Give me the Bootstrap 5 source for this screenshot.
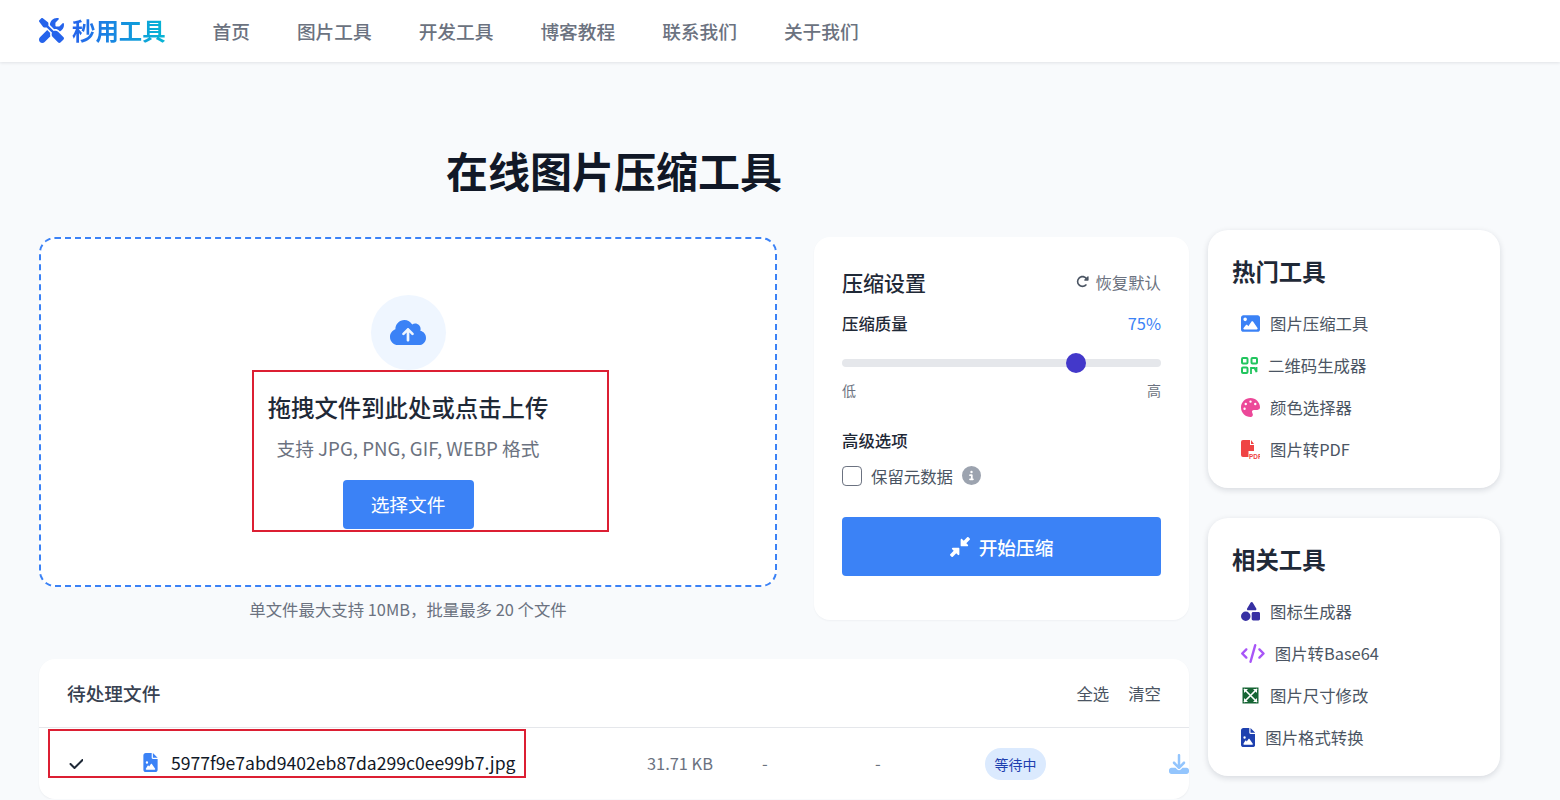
<!DOCTYPE html>
<html lang="zh-CN">
<head>
    <meta charset="UTF-8">
    <meta name="viewport" content="width=device-width, initial-scale=1.0">
    <link href="https://cdn.jsdelivr.net/npm/bootstrap@5.3.0/dist/css/bootstrap.min.css" rel="stylesheet">
    <title>在线图片压缩工具</title>
    <style>
        body {
            background: #f8fafc;
            font-family: "Noto Sans CJK SC", "Noto Sans", sans-serif;
            color: #1f2937;
            font-size: 16.4px;
        }
        .top-nav {
            height: 62px;
            background: #fff;
            padding: 0 39px;
            box-shadow: 0 1px 3px rgba(15, 23, 42, .1);
        }
        .brand-mark { gap: 8px; margin-right: 47px; text-decoration: none; }
        .brand-mark svg { width: 25px; height: 25px; }
        .brand-text {
            font-size: 23.4px;
            font-weight: 700;
            background: linear-gradient(90deg, #2563eb, #06b6d4);
            -webkit-background-clip: text;
            background-clip: text;
            color: transparent;
        }
        .top-link { font-size: 18.7px; font-weight: 500; color: #6b7280; text-decoration: none; margin-right: 47px; }
        .page-wrap { padding: 0 60px 0 39px; gap: 19px; position: relative; }
        .main-col { width: 1150px; }
        .side-col { width: 292px; margin-top: 168px; gap: 30px; }
        .page-title { font-size: 42px; font-weight: 700; color: #111827; line-height: 60px; margin: 78px 0 37px; text-align: center; }
        .upload-col { width: 738px; }
        .settings-col { width: 375px; }
        .top-blocks { gap: 37px; }
        .drop-zone {
            height: 350px;
            background: #fff;
            border: 2px dashed #3b82f6;
            border-radius: 16px;
            padding-top: 56px;
        }
        .cloud-round { width: 75px; height: 75px; border-radius: 50%; background: #eff6ff; }
        .cloud-round svg { width: 36px; height: 29px; fill: #3b82f6; }
        .drop-title { font-size: 23.4px; font-weight: 500; color: #1f2937; line-height: 34px; margin: 20px 0 0; }
        .drop-sub { font-size: 18.7px; color: #6b7280; line-height: 28px; margin: 10px 0 18px; }
        .pick-btn { width: 131px; height: 49px; background: #3b82f6; color: #fff; font-size: 18.7px; border: 0; border-radius: 4px; }
        .drop-note { font-size: 16.4px; color: #6b7280; line-height: 24px; margin-top: 10px; text-align: center; }
        .settings-box { background: #fff; border-radius: 16px; height: 383px; padding: 28px; box-shadow: 0 1px 2px rgba(15, 23, 42, .04); }
        .settings-head { font-size: 21px; font-weight: 500; line-height: 34px; }
        .reset-link { font-size: 16.4px; color: #6b7280; }
        .reset-link svg { width: 13px; height: 13px; fill: #4b5563; margin-right: 6px; }
        .set-label { font-size: 16.4px; font-weight: 500; line-height: 24px; }
        .pct-value { font-size: 16.4px; color: #3b82f6; }
        .q-range { height: 20px; display: block; margin-top: 17px; }
        .q-range::-webkit-slider-runnable-track { height: 8px; background: #e5e7eb; border-radius: 4px; }
        .q-range::-webkit-slider-thumb { width: 20px; height: 20px; background: #4338ca; margin-top: -6px; border: 0; }
        .range-ends { font-size: 14px; color: #6b7280; line-height: 20px; margin-top: 7px; }
        .meta-check { width: 20px; height: 20px; margin: 0; border: 1px solid #6b7280; border-radius: 4px; }
        .meta-label { font-size: 16.4px; color: #4b5563; margin-left: 9px; }
        .info-dot { width: 19px; height: 19px; fill: #9ca3af; margin-left: 9px; }
        .start-btn { height: 59px; background: #3b82f6; color: #fff; font-size: 18.7px; font-weight: 500; border: 0; border-radius: 4px; margin-top: 29px; }
        .start-btn svg { width: 20px; height: 20px; fill: #fff; margin-right: 9px; }
        .file-box { background: #fff; border-radius: 16px; margin-top: 38px; height: 140px; box-shadow: 0 1px 2px rgba(15, 23, 42, .05); }
        .file-head { height: 69px; padding: 0 28px; border-bottom: 1px solid #e5e7eb; }
        .file-head-title { font-size: 18.7px; font-weight: 500; color: #374151; }
        .file-head-act { font-size: 16.4px; color: #4b5563; margin-left: 19px; }
        .file-row { height: 71px; display: grid; grid-template-columns: 74px 28px 476px 115px 113px 110px 1fr; align-items: center; padding-left: 30px; }
        .file-tick svg { width: 14px; height: 16px; fill: #1f2937; display: block; }
        .file-kind svg { width: 15px; height: 19px; fill: #3b82f6; display: block; margin-top: -2px; }
        .file-name { font-size: 17.6px; color: #111827; }
        .file-cell { font-size: 16.4px; color: #6b7280; }
        .wait-pill { display: inline-block; width: 61px; height: 32px; line-height: 32px; background: #dbeafe; color: #1e40af; font-size: 14px; border-radius: 16px; text-align: center; }
        .save-icon { width: 20px; height: 20px; fill: #93c5fd; display: block; margin-left: 23px; }
        .tool-box { background: #fff; border-radius: 20px; padding: 24px; box-shadow: 0 2px 6px rgba(15, 23, 42, .14); height: 258px; }
        .tool-title { font-size: 23.4px; font-weight: 700; color: #1f2937; line-height: 34px; margin: 0 0 14px; }
        .tool-item { height: 42px; padding-left: 9px; color: #4b5563; font-size: 16.4px; text-decoration: none; }
        .tool-item svg { height: 19px; flex-shrink: 0; margin-right: 10px; }
        .mark-box { position: absolute; border: 2px solid #dc1f33; pointer-events: none; }
        .mark-upload { left: 252px; top: 308px; width: 357px; height: 162px; }
        .mark-file { left: 48px; top: 667px; width: 478px; height: 49px; }
    </style>
</head>
<body>
    <nav class="top-nav d-flex align-items-center">
        <a href="#" class="brand-mark d-flex align-items-center">
            <svg viewBox="0 0 512 512" fill="#2563eb"><path d="M78.6 5C69.1-2.4 55.6-1.5 47 7L7 47c-8.5 8.5-9.4 22-2.1 31.6l80 104c4.5 5.9 11.6 9.4 19 9.4h54.1l109 109c-14.7 29-10 65.4 14.3 89.6l112 112c12.5 12.5 32.8 12.5 45.3 0l64-64c12.5-12.5 12.5-32.8 0-45.3l-112-112c-24.2-24.2-60.6-29-89.6-14.3l-109-109V104c0-7.5-3.5-14.5-9.4-19L78.6 5zM19.9 396.1C7.2 408.8 0 426.1 0 444.1C0 481.6 30.4 512 67.9 512c18 0 35.3-7.2 48-19.9L233.7 374.3c-7.8-20.9-9-43.6-3.6-65.1l-61.7-61.7L19.9 396.1zM512 144c0-10.5-1.1-20.7-3.2-30.5c-2.4-11.2-16.1-14.1-24.2-6l-63.9 63.9c-3 3-7.1 4.7-11.3 4.7H352c-8.8 0-16-7.2-16-16V102.6c0-4.2 1.7-8.3 4.7-11.3l63.9-63.9c8.1-8.1 5.2-21.8-6-24.2C388.7 1.1 378.5 0 368 0C288.5 0 224 64.5 224 144l0 .8 85.3 85.3c36-9.1 75.8 .5 104 28.7L429 274.5c49-23 83-72.8 83-130.5z"/></svg>
            <span class="brand-text">秒用工具</span>
        </a>
        <a href="#" class="top-link">首页</a>
        <a href="#" class="top-link">图片工具</a>
        <a href="#" class="top-link">开发工具</a>
        <a href="#" class="top-link">博客教程</a>
        <a href="#" class="top-link">联系我们</a>
        <a href="#" class="top-link">关于我们</a>
    </nav>

    <div class="page-wrap d-flex">
        <main class="main-col">
            <h1 class="page-title">在线图片压缩工具</h1>
            <div class="top-blocks d-flex align-items-start">
                <div class="upload-col">
                    <div class="drop-zone d-flex flex-column align-items-center">
                        <div class="cloud-round d-flex align-items-center justify-content-center">
                            <svg viewBox="0 0 640 512"><path d="M144 480C64.5 480 0 415.5 0 336c0-62.8 40.2-116.2 96.2-135.9c-.1-2.7-.2-5.4-.2-8.1c0-88.4 71.6-160 160-160c59.3 0 111 32.2 138.7 80.2C409.9 102 428.3 96 448 96c53 0 96 43 96 96c0 12.2-2.3 23.8-6.4 34.6C596 238.4 640 290.1 640 352c0 70.7-57.3 128-128 128H144zm79-217c-9.4 9.4-9.4 24.6 0 33.9s24.6 9.4 33.9 0l39-39V392c0 13.3 10.7 24 24 24s24-10.7 24-24V257.9l39 39c9.4 9.4 24.6 9.4 33.9 0s9.4-24.6 0-33.9l-80-80c-9.4-9.4-24.6-9.4-33.9 0l-80 80z"/></svg>
                        </div>
                        <h3 class="drop-title">拖拽文件到此处或点击上传</h3>
                        <p class="drop-sub">支持 JPG, PNG, GIF, WEBP 格式</p>
                        <button class="pick-btn">选择文件</button>
                    </div>
                    <div class="drop-note">单文件最大支持 10MB，批量最多 20 个文件</div>
                </div>
                <div class="settings-col">
                    <div class="settings-box d-flex flex-column">
                        <div class="d-flex justify-content-between align-items-center">
                            <span class="settings-head">压缩设置</span>
                            <span class="reset-link d-flex align-items-center">
                                <svg viewBox="0 0 512 512"><path d="M463.5 224H472c13.3 0 24-10.7 24-24V72c0-9.7-5.8-18.5-14.8-22.2s-19.3-1.7-26.2 5.2L413.4 96.6c-87.6-86.5-228.7-86.2-315.8 1c-87.5 87.5-87.5 229.3 0 316.8s229.3 87.5 316.8 0c12.5-12.5 12.5-32.8 0-45.3s-32.8-12.5-45.3 0c-62.5 62.5-163.8 62.5-226.3 0s-62.5-163.8 0-226.3c62.2-62.2 162.7-62.5 225.3-1L327 183c-6.9 6.9-8.9 17.2-5.2 26.2s12.5 14.8 22.2 14.8H463.5z"/></svg>恢复默认
                            </span>
                        </div>
                        <div class="d-flex justify-content-between mt-2 pt-1">
                            <span class="set-label">压缩质量</span>
                            <span class="pct-value">75%</span>
                        </div>
                        <input type="range" class="form-range q-range" min="0" max="100" value="75">
                        <div class="range-ends d-flex justify-content-between"><span>低</span><span>高</span></div>
                        <div class="set-label mt-4 pt-1">高级选项</div>
                        <div class="d-flex align-items-center mt-2 pt-1">
                            <input type="checkbox" class="form-check-input meta-check" id="keepMeta">
                            <label class="meta-label" for="keepMeta">保留元数据</label>
                            <svg class="info-dot" viewBox="0 0 512 512"><path d="M256 512A256 256 0 1 0 256 0a256 256 0 1 0 0 512zM216 336h24V272H216c-13.3 0-24-10.7-24-24s10.7-24 24-24h48c13.3 0 24 10.7 24 24v88h8c13.3 0 24 10.7 24 24s-10.7 24-24 24H216c-13.3 0-24-10.7-24-24s10.7-24 24-24zm40-208a32 32 0 1 1 0 64 32 32 0 1 1 0-64z"/></svg>
                        </div>
                        <button class="start-btn d-flex align-items-center justify-content-center">
                            <svg viewBox="0 0 512 512"><path d="M439 7c9.4-9.4 24.6-9.4 33.9 0l32 32c9.4 9.4 9.4 24.6 0 33.9l-87 87 39 39c6.9 6.9 8.9 17.2 5.2 26.2s-12.5 14.8-22.2 14.8H296c-13.3 0-24-10.7-24-24V72c0-9.7 5.8-18.5 14.8-22.2s19.3-1.7 26.2 5.2l39 39L439 7zM72 272H216c13.3 0 24 10.7 24 24V440c0 9.7-5.8 18.5-14.8 22.2s-19.3 1.7-26.2-5.2l-39-39L73 505c-9.4 9.4-24.6 9.4-33.9 0L7 473c-9.4-9.4-9.4-24.6 0-33.9l87-87L55 313c-6.9-6.9-8.9-17.2-5.2-26.2s12.5-14.8 22.2-14.8z"/></svg>开始压缩
                        </button>
                    </div>
                </div>
            </div>
            <section class="file-box">
                <div class="file-head d-flex align-items-center">
                    <span class="file-head-title me-auto">待处理文件</span>
                    <span class="file-head-act">全选</span>
                    <span class="file-head-act">清空</span>
                </div>
                <div class="file-row">
                    <span class="file-tick"><svg viewBox="0 0 448 512"><path d="M470.6 105.4c12.5 12.5 12.5 32.8 0 45.3l-256 256c-12.5 12.5-32.8 12.5-45.3 0l-128-128c-12.5-12.5-12.5-32.8 0-45.3s32.8-12.5 45.3 0L192 338.7 425.4 105.4c12.5-12.5 32.8-12.5 45.3 0z" transform="translate(-16 0)"/></svg></span>
                    <span class="file-kind"><svg viewBox="0 0 384 512"><path d="M64 0C28.7 0 0 28.7 0 64V448c0 35.3 28.7 64 64 64H320c35.3 0 64-28.7 64-64V160H256c-17.7 0-32-14.3-32-32V0H64zM256 0V128H384L256 0zM64 256a32 32 0 1 1 64 0 32 32 0 1 1 -64 0zm152 32c5.3 0 10.2 2.6 13.2 6.9l88 128c3.4 4.9 3.7 11.3 1 16.5s-8.2 8.6-14.2 8.6H216 176 128 80c-5.8 0-11.1-3.1-13.9-8.1s-2.8-11.2 .2-16.1l48-80c2.9-4.8 8.1-7.8 13.7-7.8s10.8 2.9 13.7 7.8l12.8 21.4 48.3-70.2c3-4.3 7.9-6.9 13.2-6.9z"/></svg></span>
                    <span class="file-name">5977f9e7abd9402eb87da299c0ee99b7.jpg</span>
                    <span class="file-cell">31.71 KB</span>
                    <span class="file-cell">-</span>
                    <span class="file-cell">-</span>
                    <span class="d-flex align-items-center">
                        <span class="wait-pill">等待中</span>
                        <svg class="save-icon ms-auto" viewBox="0 0 512 512"><path d="M288 32c0-17.7-14.3-32-32-32s-32 14.3-32 32V274.7l-73.4-73.4c-12.5-12.5-32.8-12.5-45.3 0s-12.5 32.8 0 45.3l128 128c12.5 12.5 32.8 12.5 45.3 0l128-128c12.5-12.5 12.5-32.8 0-45.3s-32.8-12.5-45.3 0L288 274.7V32zM64 352c-35.3 0-64 28.7-64 64v32c0 35.3 28.7 64 64 64H448c35.3 0 64-28.7 64-64V416c0-35.3-28.7-64-64-64H346.5l-45.3 45.3c-25 25-65.5 25-90.5 0L165.5 352H64z"/></svg>
                    </span>
                </div>
            </section>
        </main>

        <aside class="side-col d-flex flex-column">
            <div class="tool-box">
                <h4 class="tool-title">热门工具</h4>
                <a href="#" class="tool-item d-flex align-items-center"><svg viewBox="0 0 512 512" fill="#3b82f6"><path d="M0 96C0 60.7 28.7 32 64 32H448c35.3 0 64 28.7 64 64V416c0 35.3-28.7 64-64 64H64c-35.3 0-64-28.7-64-64V96zM323.8 202.5c-4.5-6.6-11.9-10.5-19.8-10.5s-15.4 3.9-19.8 10.5l-87 127.6L170.7 297c-4.6-5.7-11.5-9-18.7-9s-14.2 3.3-18.7 9l-64 80c-5.8 7.2-6.9 17.1-2.9 25.4s12.4 13.6 21.6 13.6h96 32H424c8.9 0 17.1-4.9 21.2-12.8s3.6-17.4-1.4-24.7l-120-176zM112 192a48 48 0 1 0 0-96 48 48 0 1 0 0 96z"/></svg>图片压缩工具</a>
                <a href="#" class="tool-item d-flex align-items-center"><svg viewBox="0 0 17 19" style="width:17px" fill="none" stroke="#22c55e" stroke-width="2"><rect x="1" y="2" width="5.5" height="5.5" rx="1"/><rect x="10.5" y="2" width="5.5" height="5.5" rx="1"/><rect x="1" y="11.5" width="5.5" height="5.5" rx="1"/><path d="M10 18v-7M10.5 12h3l2 4V11" stroke-width="1.8"/></svg>二维码生成器</a>
                <a href="#" class="tool-item d-flex align-items-center"><svg viewBox="0 0 512 512" fill="#ec4899"><path d="M512 256c0 .9 0 1.8 0 2.7c-.4 36.5-33.6 61.3-70.1 61.3H344c-26.5 0-48 21.5-48 48c0 3.4 .4 6.7 1 9.9c2.1 10.2 6.5 20 10.8 29.9c6.1 13.8 12.1 27.5 12.1 42c0 31.8-21.6 60.7-53.4 62c-3.5 .1-7 .2-10.6 .2C114.6 512 0 397.4 0 256S114.6 0 256 0S512 114.6 512 256zM128 288a32 32 0 1 0 -64 0 32 32 0 1 0 64 0zm0-96a32 32 0 1 0 0-64 32 32 0 1 0 0 64zM288 96a32 32 0 1 0 -64 0 32 32 0 1 0 64 0zm96 96a32 32 0 1 0 0-64 32 32 0 1 0 0 64z"/></svg>颜色选择器</a>
                <a href="#" class="tool-item d-flex align-items-center"><svg viewBox="0 0 19 19" fill="#ef4444"><path d="M2 0h7v5h4v6H7.5v6H2a2 2 0 0 1-2-2V2a2 2 0 0 1 2-2zM10 0l3 4h-3z"/><text x="8" y="18.5" font-size="6.4" font-weight="700" font-family="Liberation Sans, sans-serif">PDF</text></svg>图片转PDF</a>
            </div>
            <div class="tool-box">
                <h4 class="tool-title">相关工具</h4>
                <a href="#" class="tool-item d-flex align-items-center"><svg viewBox="0 0 512 512" fill="#3730a3"><path d="M315.4 15.5C309.7 5.9 299.2 0 288 0s-21.7 5.9-27.4 15.5l-96 160c-5.9 9.9-6.1 22.2-.4 32.2s16.3 16.2 27.8 16.2H384c11.5 0 22.2-6.2 27.8-16.2s5.5-22.3-.4-32.2l-96-160zM288 312V456c0 22.1 17.9 40 40 40H472c22.1 0 40-17.9 40-40V312c0-22.1-17.9-40-40-40H328c-22.1 0-40 17.9-40 40zM128 512a128 128 0 1 0 0-256 128 128 0 1 0 0 256z"/></svg>图标生成器</a>
                <a href="#" class="tool-item d-flex align-items-center"><svg viewBox="0 0 640 512" fill="#a855f7"><path d="M392.8 1.2c-17-4.9-34.7 5-39.6 22l-128 448c-4.9 17 5 34.7 22 39.6s34.7-5 39.6-22l128-448c4.9-17-5-34.7-22-39.6zm80.6 120.1c-12.5 12.5-12.5 32.8 0 45.3L562.7 256l-89.4 89.4c-12.5 12.5-12.5 32.8 0 45.3s32.8 12.5 45.3 0l112-112c12.5-12.5 12.5-32.8 0-45.3l-112-112c-12.5-12.5-32.8-12.5-45.3 0zm-306.7 0c-12.5-12.5-32.8-12.5-45.3 0l-112 112c-12.5 12.5-12.5 32.8 0 45.3l112 112c12.5 12.5 32.8 12.5 45.3 0s12.5-32.8 0-45.3L77.3 256l89.4-89.4c12.5-12.5 12.5-32.8 0-45.3z"/></svg>图片转Base64</a>
                <a href="#" class="tool-item d-flex align-items-center"><svg viewBox="0 0 19 19"><rect x="1.5" y="1.5" width="16" height="16" fill="#166534"/><path d="M3 3l13 13M16 3L3 16" stroke="#fff" stroke-width="1.6"/><path d="M3 3h4L3 7zM16 3v4l-4-4zM3 16v-4l4 4zM16 16h-4l4-4z" fill="#fff"/></svg>图片尺寸修改</a>
                <a href="#" class="tool-item d-flex align-items-center"><svg viewBox="0 0 384 512" fill="#1e40af"><path d="M64 0C28.7 0 0 28.7 0 64V448c0 35.3 28.7 64 64 64H320c35.3 0 64-28.7 64-64V160H256c-17.7 0-32-14.3-32-32V0H64zM256 0V128H384L256 0zM64 256a32 32 0 1 1 64 0 32 32 0 1 1 -64 0zm152 32c5.3 0 10.2 2.6 13.2 6.9l88 128c3.4 4.9 3.7 11.3 1 16.5s-8.2 8.6-14.2 8.6H216 176 128 80c-5.8 0-11.1-3.1-13.9-8.1s-2.8-11.2 .2-16.1l48-80c2.9-4.8 8.1-7.8 13.7-7.8s10.8 2.9 13.7 7.8l12.8 21.4 48.3-70.2c3-4.3 7.9-6.9 13.2-6.9z"/></svg>图片格式转换</a>
            </div>
        </aside>
        <div class="mark-box mark-upload"></div>
        <div class="mark-box mark-file"></div>
    </div>
</body>
</html>
